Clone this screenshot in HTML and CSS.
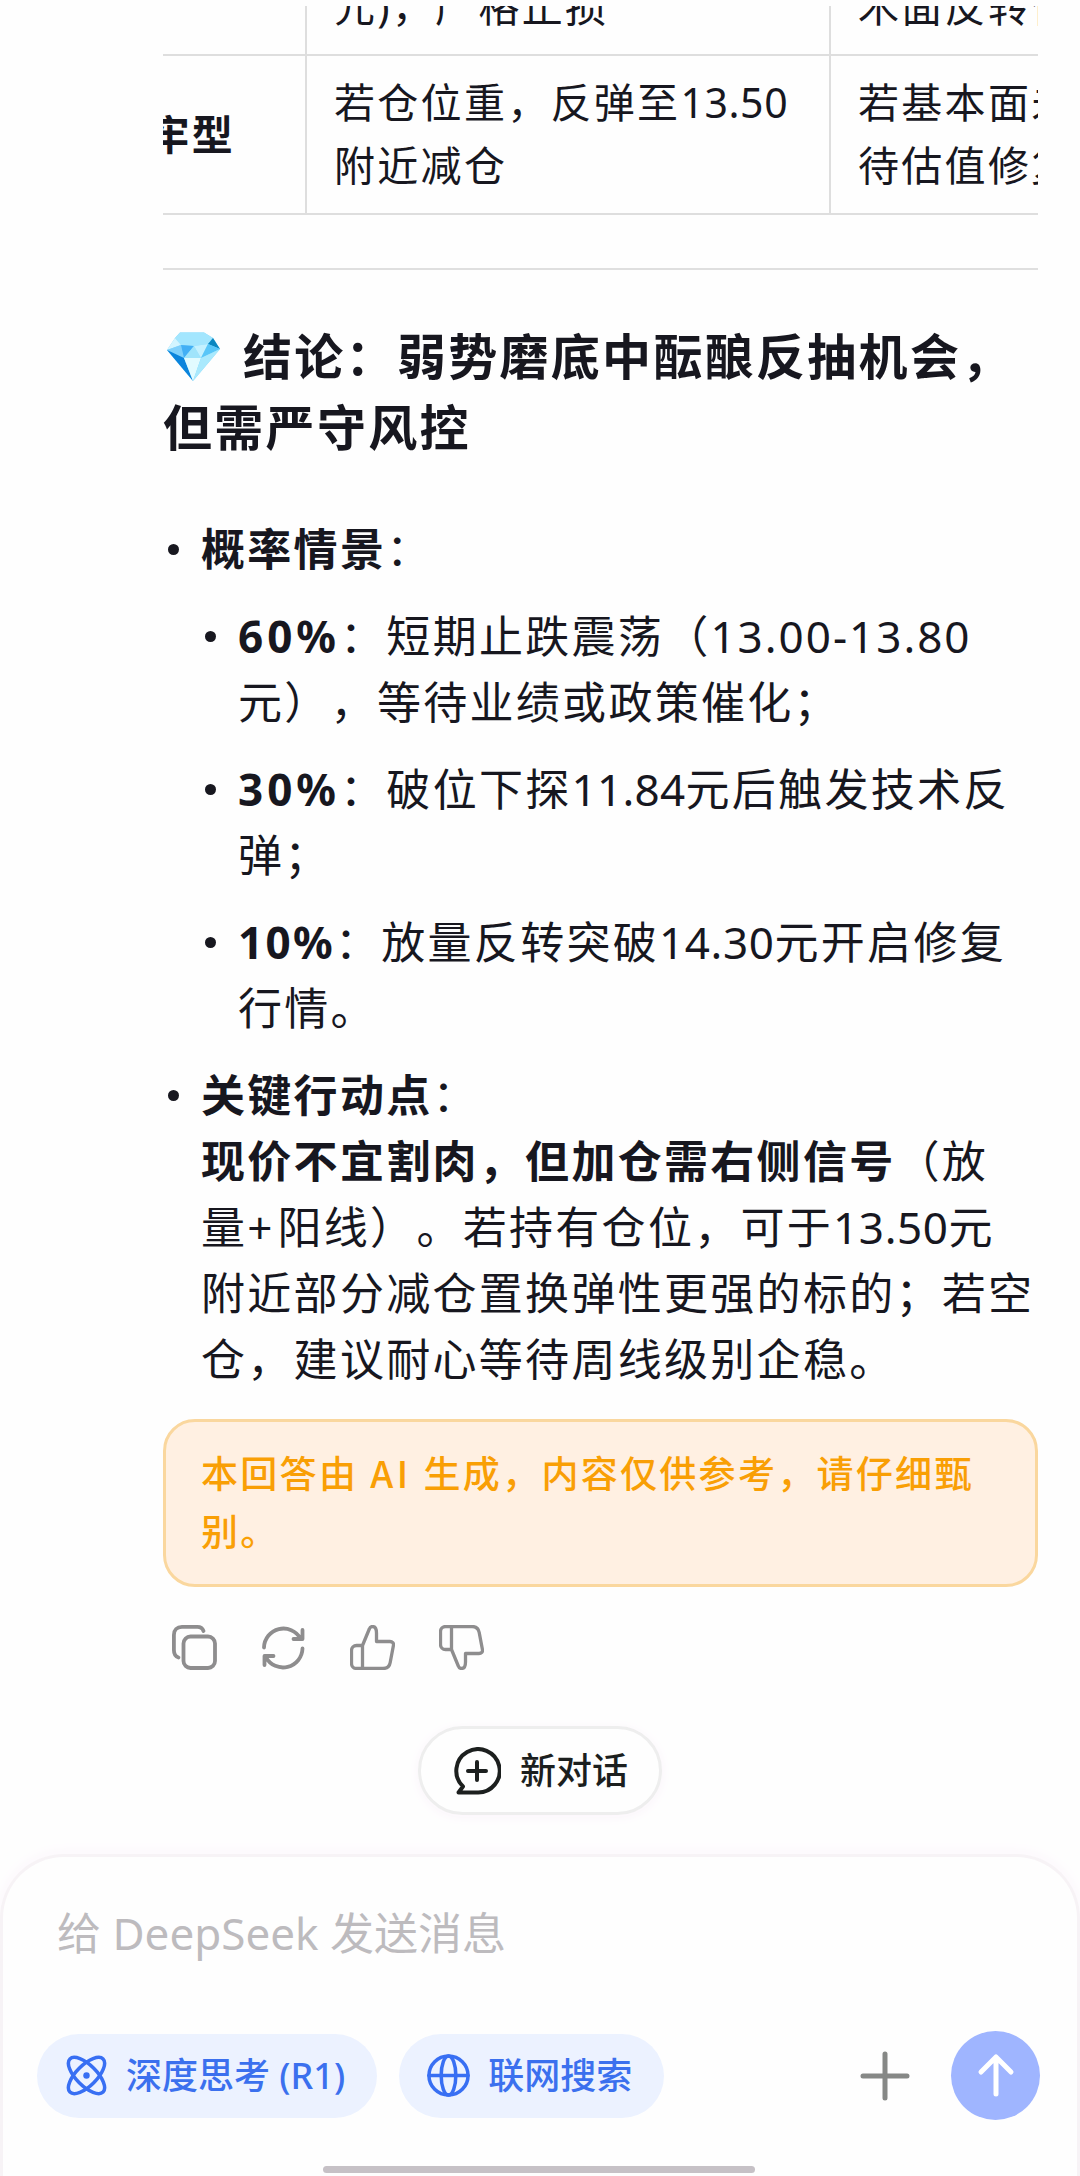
FILE: index.html
```html
<!DOCTYPE html>
<html lang="zh-CN">
<head>
    <meta charset="UTF-8">
    <meta name="viewport" content="width=device-width, initial-scale=1.0">
    <title>DeepSeek</title>
    <link rel="stylesheet" href="styles.css">
</head>
<body>
    <div class="chat">
        <div class="table-scroll">
            <div class="table-row">
                <div class="cell cell-name"></div>
                <div class="cell cell-short">元)，严格止损</div>
                <div class="cell cell-long">木面反转信号</div>
            </div>
            <div class="table-row">
                <div class="cell cell-name">套牢型</div>
                <div class="cell cell-short">若仓位重，反弹至<span class="num">13.50</span><br>附近减仓</div>
                <div class="cell cell-long">若基本面未变<br>待估值修复</div>
            </div>
        </div>

        <div class="divider"></div>

        <h3 class="title">
            <svg class="gem" viewBox="0 0 56 50">
                <path d="M14 .5h24l9 5.500 7 11-27 32L1 18 9 6z" fill="#7fd6fb"/>
                <path d="M14 .5h24l9 5.500-5 6-14 2-13-1-6-7z" fill="#a3e6fe"/>
                <path d="M9 6l6 7-14 5z" fill="#d3f5ff"/>
                <path d="M47 6l7 11-12-5z" fill="#0a86c0"/>
                <path d="M1 18l14-5 3 13z" fill="#7fd0fb"/>
                <path d="M15 13l13 1-10 12z" fill="#42aff5"/>
                <path d="M28 14l7 12H18z" fill="#a0e4fb"/>
                <path d="M28 14l14-2-7 14z" fill="#c4f1ff"/>
                <path d="M42 12l12 5-19 9z" fill="#59c6f8"/>
                <path d="M1 18l17 8 9 23z" fill="#0b84dc"/>
                <path d="M18 26h17l-8 23z" fill="#e2fbff"/>
                <path d="M35 26l19-9-27 32z" fill="#a9e9fd"/>
            </svg>结论：弱势磨底中酝酿反抽机会，<br>但需严守风控
        </h3>

        <ul class="list">
            <li>
                <b>概率情景</b>：
                <ul class="list sub">
                    <li><b class="pct">60%</b>：短期止跌震荡（<span class="num range">13.00-13.80</span><br>元），等待业绩或政策催化；</li>
                    <li><b class="pct">30%</b>：破位下探<span class="num tight">11.84</span>元后触发技术反<br>弹；</li>
                    <li><b>10%</b>：放量反转突破<span class="num">14.30</span>元开启修复<br>行情。</li>
                </ul>
            </li>
            <li>
                <b>关键行动点</b>：<br>
                <b>现价不宜割肉，但加仓需右侧信号</b>（放<br>量<span class="sign">+</span>阳线）。若持有仓位，可于<span class="num">13.50</span>元<br>附近部分减仓置换弹性更强的标的；若空<br>仓，建议耐心等待周线级别企稳。
            </li>
        </ul>

        <div class="notice">本回答由 <span class="latin">AI</span> 生成，内容仅供参考，请仔细甄<br>别。</div>

        <div class="actions">
            <svg viewBox="0 0 45 45">
                <rect x="11.5" y="11.5" width="31.5" height="31.5" rx="7"/>
                <path d="M31.5 6c-1-2.700-3-4.100-6-4.100H10c-5 0-8.100 3.100-8.100 8.100V25c0 4 1.600 6.500 4.600 7.500"/>
            </svg>
            <svg viewBox="0 0 45 45">
                <path d="M3 22.500a19.500 19.500 0 0 1 36.500-9M41.500 5v9h-9M41.500 23.500a19.500 19.500 0 0 1-36.500 9M3.500 40v-9h9"/>
            </svg>
            <svg class="thumb" viewBox="0 0 45 45">
                <path d="M12.500 20.500H6.500a5 5 0 0 0-5 5v13a5 5 0 0 0 5 5H33c4 0 6.500-2 7.200-6l3.200-17c.5-2.600-1-4-3.400-4H26.500V8c0-4-1.500-6.500-4-6.500-1.600 0-2.700 1-3.200 2.500zM12.500 20.500v23"/>
            </svg>
            <svg class="thumb flip" viewBox="0 0 45 45">
                <path d="M12.500 20.500H6.500a5 5 0 0 0-5 5v13a5 5 0 0 0 5 5H33c4 0 6.500-2 7.200-6l3.200-17c.5-2.600-1-4-3.400-4H26.500V8c0-4-1.500-6.500-4-6.500-1.600 0-2.700 1-3.200 2.500zM12.500 20.500v23"/>
            </svg>
        </div>
    </div>

    <div class="new-chat">
        <svg viewBox="0 0 48 48">
            <path d="M24 45.500H5.500l4.500-6A21.700 21.700 0 1 1 24 45.500zM24 15v18M15 24h18"/>
        </svg>
        新对话
    </div>

    <div class="composer">
        <div class="placeholder">给 DeepSeek 发送消息</div>
        <div class="toolbar">
            <div class="chip">
                <svg viewBox="0 0 44 44">
                    <ellipse cx="22" cy="22" rx="24" ry="10.500" transform="rotate(45 22 22)"/>
                    <ellipse cx="22" cy="22" rx="24" ry="10.500" transform="rotate(-45 22 22)"/>
                    <circle class="dot" cx="22" cy="22" r="3.300"/>
                </svg>
                <span>深度思考 (R1)</span>
            </div>
            <div class="chip">
                <svg viewBox="0 0 44 44">
                    <circle cx="22" cy="22" r="20"/>
                    <ellipse cx="22" cy="22" rx="7.500" ry="20"/>
                    <path d="M2 22h40"/>
                </svg>
                <span>联网搜索</span>
            </div>
            <svg class="plus" viewBox="0 0 50 50">
                <path d="M25 3v44M3 25h44"/>
            </svg>
            <div class="send">
                <svg viewBox="0 0 42 46">
                    <path d="M21 4v37M6 19L21 4l15 15"/>
                </svg>
            </div>
        </div>
        <div class="home-bar"></div>
    </div>
</body>
</html>
```
FILE: styles.css
```css
* {
    box-sizing: border-box;
}

body {
    margin: 0;
    width: 1080px;
    height: 2176px;
    display: flex;
    flex-direction: column;
    overflow: hidden;
    font-family: 'Noto Sans', 'Noto Sans CJK SC', sans-serif;
    color: #17171f;
    background-color: #fefefe;
    white-space: nowrap;
    text-spacing-trim: space-all;
}

svg {
    fill: none;
    stroke-linecap: round;
    stroke-linejoin: round;
    flex-shrink: 0;
}

.chat {
    width: 875px;
    height: 1720px;
    margin: 6px 0 0 163px;
    letter-spacing: 2.3px;
    flex-shrink: 0;
}

/* table, scrolled to the right */
.table-scroll {
    height: 209px;
    display: flex;
    flex-direction: column;
    justify-content: flex-end;
    overflow: hidden;
    font-size: 41px;
    line-height: 63px;
}

.table-row {
    display: flex;
    flex-shrink: 0;
    border-bottom: 2px solid #dedede;
}

.cell {
    padding: 15px 0 16px 27px;
    flex-shrink: 0;
}

.cell-name {
    display: flex;
    align-items: center;
    justify-content: flex-end;
    width: 142px;
    padding-right: 70px;
    font-weight: 700;
}

.cell-short {
    width: 524px;
    border-left: 2px solid #dedede;
}

.cell-long {
    border-left: 2px solid #dedede;
}

.num {
    letter-spacing: 0.6px;
}

.num.range {
    letter-spacing: 2px;
}

.num.tight {
    letter-spacing: 0.3px;
}

.sign {
    letter-spacing: 5px;
}

.pct {
    letter-spacing: 4px;
}

.divider {
    height: 2px;
    margin-top: 53px;
    background-color: #dfdfdf;
}

.title {
    margin: 51px 0 0;
    font-size: 49px;
    line-height: 71px;
    font-weight: 700;
}

.gem {
    width: 56px;
    height: 50px;
    margin: 0 21px 0 3px;
    vertical-align: -7px;
}

.list {
    margin: 53px 0 0;
    padding: 0 0 0 38px;
    list-style: none;
    font-size: 44px;
    line-height: 66px;
}

.list li {
    position: relative;
}

.list li + li {
    margin-top: 21px;
}

.list li::before {
    content: "";
    position: absolute;
    left: -33px;
    top: 28px;
    width: 11px;
    height: 11px;
    border-radius: 50%;
    background-color: #17171f;
}

.list.sub {
    margin-top: 21px;
    padding-left: 37px;
}

.notice {
    margin-top: 27px;
    height: 168px;
    padding: 21px 35px;
    border: 3px solid #fad79e;
    border-radius: 32px;
    background-color: #fff0e2;
    color: #f99f05;
    font-size: 37px;
    line-height: 58px;
    font-weight: 500;
}

.notice .latin {
    font-family: 'Noto Sans CJK SC', sans-serif;
    letter-spacing: 3.5px;
}

.actions {
    display: flex;
    gap: 44px;
    margin: 38px 0 0 9px;
}

.actions svg {
    width: 45px;
    height: 45px;
    stroke: #8e8d8e;
    stroke-width: 3.8;
}

.actions .thumb {
    stroke-width: 3.3;
}

.actions .flip {
    transform: scaleY(-1);
}

.new-chat {
    display: flex;
    align-items: center;
    align-self: center;
    gap: 19px;
    width: 244px;
    height: 89px;
    padding-left: 32px;
    border: 3px solid #eeeeee;
    border-radius: 45px;
    box-shadow: 0 2px 12px #fbf4fb;
    font-size: 36px;
    line-height: 54px;
    font-weight: 500;
    color: #1c1f1e;
    flex-shrink: 0;
}

.new-chat svg {
    width: 48px;
    height: 48px;
    stroke: #1c1f1e;
    stroke-width: 4;
}

.composer {
    display: flex;
    flex-direction: column;
    height: 322px;
    margin-top: 39px;
    padding: 46px 37px 3px 34px;
    border: 3px solid #f7f3f6;
    border-bottom: 0;
    border-radius: 64px 64px 0 0;
    box-shadow: 0 -2px 14px #fcf6fc;
    flex-shrink: 0;
}

.placeholder {
    padding-left: 20px;
    font-size: 44px;
    line-height: 60px;
    color: #bdbbbe;
}

.toolbar {
    display: flex;
    align-items: center;
    margin-top: 68px;
    height: 89px;
}

.chip {
    display: flex;
    align-items: center;
    height: 84px;
    margin-right: 22px;
    padding: 0 32px 0 28px;
    border-radius: 42px;
    background-color: #ecf2ff;
    color: #3b70ee;
    font-size: 36px;
    line-height: 54px;
    font-weight: 500;
    gap: 18px;
}

.chip svg {
    width: 43px;
    height: 43px;
    stroke: #386ff3;
    stroke-width: 3.6;
}

.chip .dot {
    fill: #386ff3;
    stroke: none;
}

.plus {
    width: 50px;
    height: 50px;
    margin-left: auto;
    stroke: #868886;
    stroke-width: 5;
}

.send {
    display: flex;
    align-items: center;
    justify-content: center;
    width: 89px;
    height: 89px;
    margin-left: 41px;
    border-radius: 50%;
    background-color: #9fb5ff;
}

.send svg {
    width: 42px;
    height: 46px;
    stroke: #ffffff;
    stroke-width: 5;
}

.home-bar {
    align-self: center;
    width: 432px;
    height: 7px;
    margin-top: auto;
    border-radius: 4px;
    background-color: #c6c1c6;
}
```
